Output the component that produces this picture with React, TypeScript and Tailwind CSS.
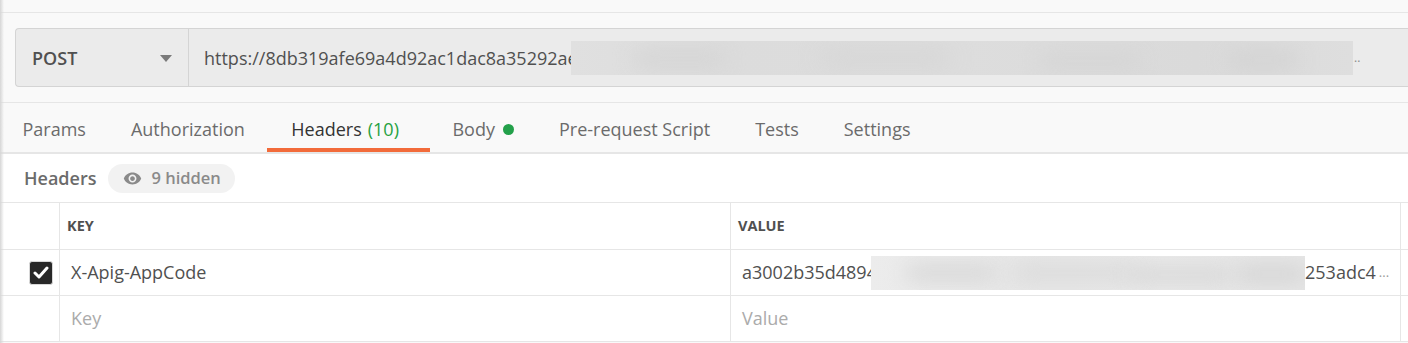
import { MdVisibility } from 'react-icons/md'

const tabs = [
  { label: 'Params' },
  { label: 'Authorization' },
  { label: 'Headers', count: '(10)', active: true },
  { label: 'Body', dot: true },
  { label: 'Pre-request Script' },
  { label: 'Tests' },
  { label: 'Settings' },
]

function Blur({ className }: { className: string }) {
  return (
    <div className={`relative overflow-hidden ${className}`}>
      <div className="absolute left-[8%] top-[35%] h-[12px] w-[90px] rounded-full bg-[#d2d2d2] blur-[10px]" />
      <div className="absolute left-[32%] top-[30%] h-[14px] w-[130px] rounded-full bg-[#d4d4d4] blur-[12px]" />
      <div className="absolute left-[60%] top-[40%] h-[12px] w-[100px] rounded-full bg-[#d3d3d3] blur-[10px]" />
      <div className="absolute left-[84%] top-[35%] h-[14px] w-[70px] rounded-full bg-[#d1d1d1] blur-[10px]" />
    </div>
  )
}

export default function App() {
  return (
    <div
      className="relative h-[343px] w-full overflow-hidden bg-[#f9f9f9] text-[18px]"
      style={{ fontFamily: '"Open Sans", "Liberation Sans", sans-serif' }}
    >
      {/* top strip */}
      <div className="h-[13px] border-b border-[#e6e6e6]" />

      {/* request bar */}
      <div className="border-b border-[#e6e6e6] pb-[15px] pl-[15px] pt-[15px]">
        <div className="flex h-[59px] rounded-l-[4px] border border-r-0 border-[#d4d4d4] bg-[#ebebeb]">
          <div className="flex w-[173px] shrink-0 items-center justify-between border-r border-[#d4d4d4] pl-[16px] pr-[16px] pt-[1px]">
            <span className="font-semibold text-[#505050]">POST</span>
            <svg width="12" height="7" viewBox="0 0 12 7">
              <polygon points="0,0 12,0 6,7" fill="#7a7a7a" />
            </svg>
          </div>
          <div className="flex min-w-0 items-center pl-[15px] pt-[1px] text-[#505050]">
            <span className="w-[367px] shrink-0 overflow-hidden whitespace-nowrap">
              https://8db319afe69a4d92ac1dac8a35292ae6
            </span>
            <Blur className="h-[34px] w-[782px] shrink-0 bg-[linear-gradient(90deg,#e0e0e0,#dcdcdc_20%,#dddddd_50%,#dadada_80%,#dedede)]" />
            <span className="pl-px text-[12px] text-[#8a8a8a]">..</span>
          </div>
        </div>
      </div>

      {/* tabs */}
      <div className="flex h-[51px] border-b-2 border-[#e6e6e6]">
        {tabs.map((t) => (
          <div
            key={t.label}
            className={`flex h-[49px] items-center ${
              t.active
                ? 'border-b-[4px] border-[#f26b3a] pl-[24px] pr-[31px] pt-[7px] text-[#333333]'
                : 'px-[22.5px] pt-[3px] text-[#6b6b6b]'
            }`}
          >
            <span>{t.label}</span>
            {t.count && <span className="ml-[6px] text-[#26a142]">{t.count}</span>}
            {t.dot && <span className="ml-[8px] h-[11px] w-[11px] rounded-full bg-[#23a04a]" />}
          </div>
        ))}
      </div>

      {/* headers bar */}
      <div className="flex h-[48px] items-center gap-[12px] bg-white pl-[24px]">
        <span className="font-semibold text-[#6b6b6b]">Headers</span>
        <span className="flex h-[29px] w-[127px] items-center gap-[9px] rounded-full bg-[#f2f2f2] pl-[15px] text-[16.5px] font-semibold text-[#8a8a8a]">
          <MdVisibility size={19} className="text-[#8a8a8a]" />
          9 hidden
        </span>
      </div>

      {/* table */}
      <div className="bg-white">
        <div className="grid grid-cols-[60px_671px_670px_7px] border-y border-[#e6e6e6] text-[#505050]">
          <div className="h-[46px] border-r border-[#e6e6e6]" />
          <div className="flex h-[46px] items-center border-r border-[#e6e6e6] pl-[7px] text-[14.5px] font-bold">KEY</div>
          <div className="flex h-[46px] items-center border-r border-[#e6e6e6] pl-[7px] text-[14.5px] font-bold">VALUE</div>
          <div />

          <div className="flex h-[46px] items-center border-r border-t border-[#e6e6e6] pl-[29px]">
            <span className="flex h-[24px] w-[24px] items-center justify-center rounded-[3px] border border-[#d8d8d8] bg-[#282828]">
              <svg width="16" height="13" viewBox="0 0 16 13">
                <path d="M2 7 L6 11 L14 2" stroke="#ffffff" strokeWidth="3" fill="none" strokeLinecap="round" strokeLinejoin="round" />
              </svg>
            </span>
          </div>
          <div className="flex h-[46px] items-center border-r border-t border-[#e6e6e6] pl-[11px]">X-Apig-AppCode</div>
          <div className="flex h-[46px] items-center border-r border-t border-[#e6e6e6] pl-[11px]">
            <span className="w-[129px] shrink-0 overflow-hidden whitespace-nowrap">a3002b35d4894</span>
            <Blur className="h-[34px] w-[434px] shrink-0 bg-[linear-gradient(90deg,#ececec,#e8e8e8_30%,#eaeaea_60%,#e6e6e6_90%)]" />
            <span className="shrink-0">253adc4</span>
            <span className="ml-[3px] text-[13px] text-[#9a9a9a]">...</span>
          </div>
          <div className="border-t border-[#e6e6e6]" />

          <div className="h-[46px] border-r border-t border-[#e6e6e6]" />
          <div className="flex h-[46px] items-center border-r border-t border-[#e6e6e6] pl-[11px] text-[#ababab]">Key</div>
          <div className="flex h-[46px] items-center border-r border-t border-[#e6e6e6] pl-[11px] text-[#ababab]">Value</div>
          <div className="border-t border-[#e6e6e6]" />
        </div>
      </div>

      {/* left edge shadow */}
      <div className="pointer-events-none absolute inset-y-0 left-0 w-[4px] bg-[linear-gradient(90deg,#d6d6d6,transparent)]" />
    </div>
  )
}
